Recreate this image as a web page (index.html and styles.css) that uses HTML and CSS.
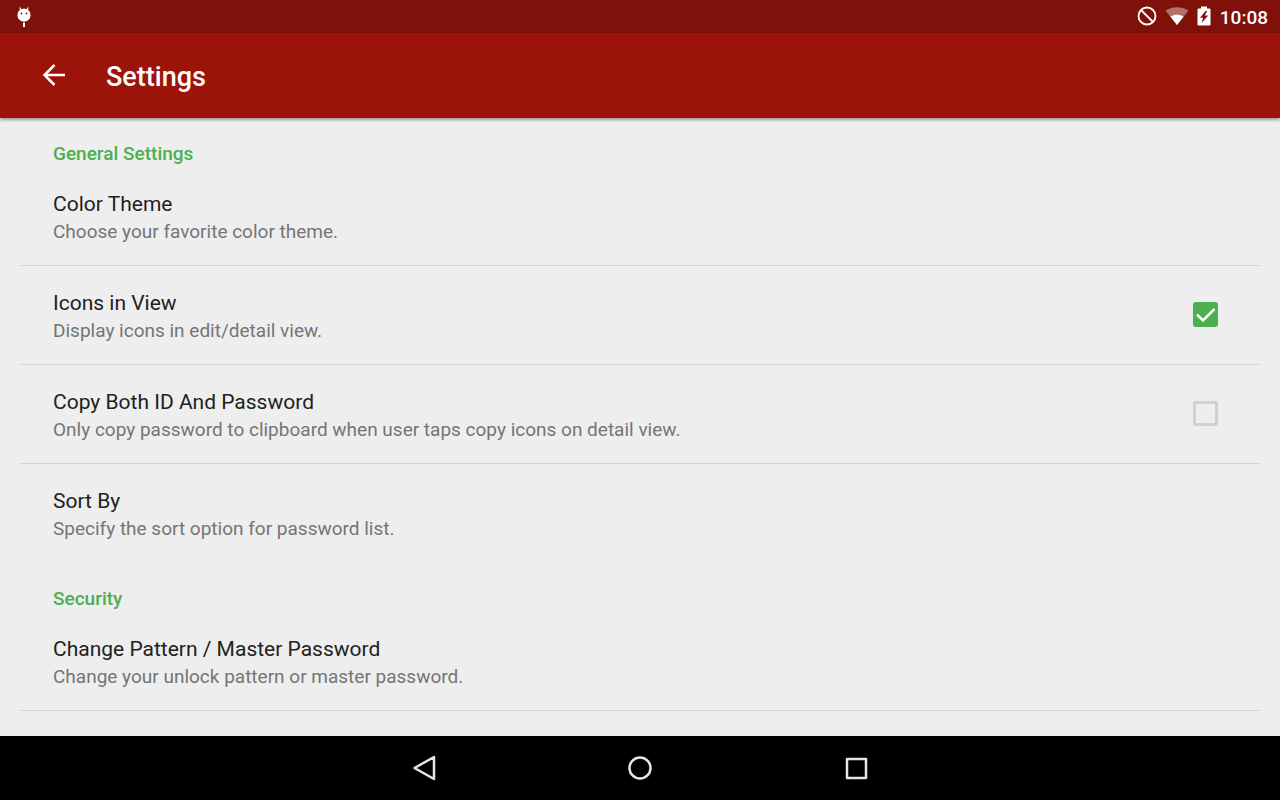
FILE: index.html
```html
<!DOCTYPE html>
<html lang="en">

<head>
    <meta charset="UTF-8">
    <meta name="viewport" content="width=device-width, initial-scale=1.0">
    <title>Settings</title>
    <link rel="stylesheet" href="styles.css">
</head>

<body>
    <!-- status bar -->
    <div class="status">
        <svg class="debug" width="16" height="22" viewBox="0 0 16 22">
            <path d="M3.500 1.500l2 3M12.500 1.500l-2 3" stroke="#fff" stroke-width="1.200" />
            <circle cx="8" cy="9" r="6.600" fill="#fff" />
            <circle cx="5.500" cy="7.500" r="0.900" fill="#7f100a" />
            <circle cx="10.500" cy="7.500" r="0.900" fill="#7f100a" />
            <path d="M8 16.500v4.500" stroke="#fff" stroke-width="2" />
        </svg>
        <div class="status-icons">
            <svg width="20" height="20" viewBox="0 0 20 20" fill="none" stroke="#fff" stroke-width="1.800">
                <circle cx="10" cy="10" r="8.500" />
                <path d="M4 4l12 12" />
            </svg>
            <svg width="24" height="20" viewBox="0 0 24 20" fill="#fff">
                <path d="M0.500 4.500C7.500 0 16.500 0 23.500 4.500L12 19z" opacity="0.400" />
                <path d="M5.500 10.800C9.500 8.200 14.500 8.200 18.500 10.800L12 19z" />
            </svg>
            <svg width="14" height="20" viewBox="0 0 14 20">
                <path d="M4 0.500h6v2h2.500q1 0 1 1v15q0 1-1 1h-11q-1 0-1-1v-15q0-1 1-1H4z" fill="#fff" />
                <path d="M8.500 5L3 11.800h3.100L4.600 17l6.600-7.500H7.800L10.200 5z" fill="#7f100a" />
            </svg>
        </div>
        <span class="clock">10:08</span>
    </div>

    <!-- toolbar -->
    <header class="toolbar">
        <button class="back" type="button" aria-label="Back">
            <svg width="24" height="24" viewBox="0 0 24 24" fill="none" stroke="#fff" stroke-width="2.500">
                <path d="M23 11H3M12.500 1L2.500 11l10 10" />
            </svg>
        </button>
        <h1>Settings</h1>
    </header>

    <main class="list">
        <h2>General Settings</h2>
        <div class="item">
            <div class="text">
                <div class="title">Color Theme</div>
                <div class="summary">Choose your favorite color theme.</div>
            </div>
        </div>
        <label class="item" for="icons">
            <span class="text">
                <span class="title">Icons in View</span>
                <span class="summary">Display icons in edit/detail view.</span>
            </span>
            <span class="check">
                <input type="checkbox" id="icons" checked>
                <svg width="25" height="25" viewBox="0 0 25 25" fill="none" stroke="#fff" stroke-width="2.500">
                    <path d="M4 12.500l6 6L21.500 7" />
                </svg>
            </span>
        </label>
        <label class="item" for="copy">
            <span class="text">
                <span class="title">Copy Both ID And Password</span>
                <span class="summary">Only copy password to clipboard when user taps copy icons on detail view.</span>
            </span>
            <span class="check">
                <input type="checkbox" id="copy">
                <svg width="25" height="25" viewBox="0 0 25 25" fill="none" stroke="#fff" stroke-width="2.500">
                    <path d="M4 12.500l6 6L21.500 7" />
                </svg>
            </span>
        </label>
        <div class="item last">
            <div class="text">
                <div class="title">Sort By</div>
                <div class="summary">Specify the sort option for password list.</div>
            </div>
        </div>

        <h2>Security</h2>
        <div class="item">
            <div class="text">
                <div class="title">Change Pattern / Master Password</div>
                <div class="summary">Change your unlock pattern or master password.</div>
            </div>
        </div>
    </main>

    <!-- navigation bar -->
    <nav class="navbar">
        <button type="button" aria-label="Back">
            <svg width="28" height="28" viewBox="0 0 28 28">
                <path d="M24 3v22L4.500 14z" />
            </svg>
        </button>
        <button type="button" aria-label="Home">
            <svg width="28" height="28" viewBox="0 0 28 28">
                <circle cx="14" cy="14" r="10.500" />
            </svg>
        </button>
        <button type="button" aria-label="Recent apps">
            <svg width="28" height="28" viewBox="0 0 28 28">
                <rect x="5" y="5" width="19" height="19" />
            </svg>
        </button>
    </nav>
</body>

</html>
```
FILE: styles.css
```css
* {
    box-sizing: border-box;
}

body {
    margin: 0;
    height: 100vh;
    display: flex;
    flex-direction: column;
    background-color: #eee;
    font-family: Roboto, "Liberation Sans", sans-serif;
    overflow: hidden;
}

svg {
    display: block;
}

button {
    border: 0;
    padding: 0;
    background: none;
}

/* status bar */
.status {
    display: flex;
    flex: none;
    align-items: center;
    height: 33px;
    padding: 0 12px 0 16px;
    background-color: #7f100a;
    color: #fff;
}

.status-icons {
    display: flex;
    gap: 8px;
    margin-left: auto;
    padding-bottom: 2px;
}

.clock {
    margin-left: 9px;
    padding-top: 2px;
    font-size: 19px;
    font-weight: 500;
}

/* toolbar */
.toolbar {
    display: flex;
    flex: none;
    align-items: center;
    height: 85px;
    padding-left: 42px;
    background-color: #9c1309;
    color: #fff;
    box-shadow: 0 2px 3px rgba(0, 0, 0, 0.35);
}

.toolbar h1 {
    margin: 0 0 0 40px;
    padding-top: 2px;
    font-size: 27px;
    font-weight: 500;
}

/* settings list */
.list {
    flex: 1;
    min-height: 0;
    padding: 0 21px;
    overflow: hidden;
}

.list h2 {
    margin: 0;
    padding: 24px 32px 1px;
    color: #4caf50;
    font-size: 19px;
    font-weight: 500;
    line-height: 24px;
}

.item {
    display: flex;
    align-items: center;
    justify-content: space-between;
    padding: 24px 41px 18px 32px;
    border-bottom: 1px solid #d0d0d0;
}

.last {
    border-color: transparent;
}

.title,
.summary {
    display: block;
}

.title {
    color: #212121;
    font-size: 21px;
    line-height: 26px;
}

.summary {
    color: #757575;
    font-size: 19px;
    line-height: 30px;
}

.check {
    display: grid;
    margin-bottom: 8px;
}

.check input,
.check svg {
    grid-area: 1 / 1;
}

.check input {
    appearance: none;
    width: 25px;
    height: 25px;
    margin: 0;
    border: 3px solid #d0d0d0;
    border-radius: 3px;
}

.check input:checked {
    border-color: #4caf50;
    background-color: #4caf50;
}

.check svg {
    visibility: hidden;
    pointer-events: none;
}

.check input:checked + svg {
    visibility: visible;
}

/* navigation bar */
.navbar {
    display: flex;
    flex: none;
    justify-content: center;
    height: 64px;
    background-color: #000;
}

.navbar button {
    display: flex;
    align-items: center;
    justify-content: center;
    width: 216px;
}

.navbar svg {
    fill: none;
    stroke: #e6e6e6;
    stroke-width: 2.5;
    stroke-linejoin: round;
}
```
